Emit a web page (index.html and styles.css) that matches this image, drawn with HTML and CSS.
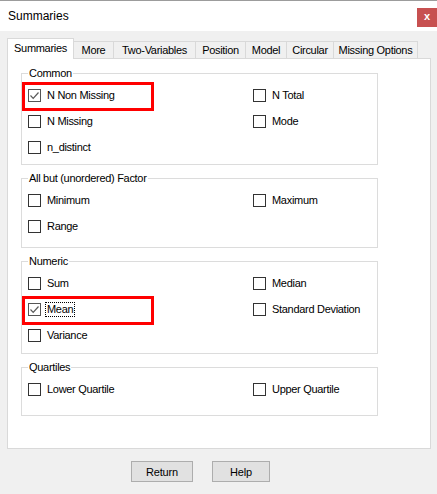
FILE: index.html
```html
<!DOCTYPE html>
<html>
<head>
<meta charset="utf-8">
<title>Summaries</title>
<link rel="stylesheet" href="styles.css">
</head>
<body>
<div class="window">
  <header class="titlebar">
    <span class="title">Summaries</span>
    <span class="close">x</span>
  </header>
  <div class="content">
    <div class="tabs">
      <div class="tab active w-summaries">Summaries</div>
      <div class="tab w-more">More</div>
      <div class="tab w-two">Two-Variables</div>
      <div class="tab w-position">Position</div>
      <div class="tab w-model">Model</div>
      <div class="tab w-circular">Circular</div>
      <div class="tab w-missing">Missing Options</div>
    </div>
    <div class="panel">
      <fieldset class="group pb-common">
        <legend>Common</legend>
        <div class="grid">
          <label class="item marked"><span class="box checked"><svg viewBox="0 0 11 11" width="11" height="11"><path d="M1.5 5.5 L4.2 8.3 L9.5 2.5" fill="none" stroke="#5a5a5a" stroke-width="1.2"/></svg></span><span class="txt">N Non Missing</span></label>
          <label class="item"><span class="box"></span><span class="txt">N Total</span></label>
          <label class="item"><span class="box"></span><span class="txt">N Missing</span></label>
          <label class="item"><span class="box"></span><span class="txt">Mode</span></label>
          <label class="item"><span class="box"></span><span class="txt">n_distinct</span></label>
        </div>
      </fieldset>
      <fieldset class="group pb-allbut">
        <legend>All but (unordered) Factor</legend>
        <div class="grid">
          <label class="item"><span class="box"></span><span class="txt">Minimum</span></label>
          <label class="item"><span class="box"></span><span class="txt">Maximum</span></label>
          <label class="item"><span class="box"></span><span class="txt">Range</span></label>
        </div>
      </fieldset>
      <fieldset class="group pb-numeric">
        <legend>Numeric</legend>
        <div class="grid">
          <label class="item"><span class="box"></span><span class="txt">Sum</span></label>
          <label class="item"><span class="box"></span><span class="txt">Median</span></label>
          <label class="item marked"><span class="box checked"><svg viewBox="0 0 11 11" width="11" height="11"><path d="M1.5 5.5 L4.2 8.3 L9.5 2.5" fill="none" stroke="#5a5a5a" stroke-width="1.2"/></svg></span><span class="txt focus">Mean</span></label>
          <label class="item"><span class="box"></span><span class="txt">Standard Deviation</span></label>
          <label class="item"><span class="box"></span><span class="txt">Variance</span></label>
        </div>
      </fieldset>
      <fieldset class="group pb-quart">
        <legend>Quartiles</legend>
        <div class="grid">
          <label class="item"><span class="box"></span><span class="txt">Lower Quartile</span></label>
          <label class="item"><span class="box"></span><span class="txt">Upper Quartile</span></label>
        </div>
      </fieldset>
    </div>
    <div class="buttons">
      <button class="btn w-return">Return</button>
      <button class="btn w-help">Help</button>
    </div>
  </div>
</div>
</body>
</html>
```

FILE: styles.css
```css
* { box-sizing: border-box; }
html, body { margin: 0; padding: 0; }
body {
  width: 437px;
  height: 494px;
  background: #f0f0f0;
  font-family: "Liberation Sans", Arial, sans-serif;
  font-size: 11px;
  color: #000;
  overflow: hidden;
}
.window { width: 437px; height: 494px; }

.titlebar {
  height: 31px;
  background: #fff;
  border-top: 1px solid #9c9c9c;
  display: flex;
  justify-content: space-between;
  align-items: flex-start;
}
.title {
  font-size: 12px;
  line-height: 16px;
  margin-top: 7px;
  margin-left: 8px;
}
.close {
  margin-top: 7px;
  width: 20px;
  height: 19px;
  background: #c75050;
  color: #fff;
  font-size: 11px;
  font-weight: bold;
  line-height: 17px;
  text-align: center;
}

.content { padding-top: 7px; }

.tabs {
  display: flex;
  align-items: flex-end;
  margin-left: 7px;
  height: 20px;
  position: relative;
  z-index: 1;
}
.tab {
  height: 17px;
  border: 1px solid #d9d9d9;
  border-bottom: none;
  background: #f0f0f0;
  text-align: center;
  line-height: 15px;
  padding-top: 1px;
  margin-left: -1px;
  letter-spacing: -0.3px;
  white-space: nowrap;
}
.tab.active {
  height: 21px;
  margin-bottom: -1px;
  margin-left: 0;
  background: #fff;
  line-height: 14px;
  padding-top: 2px;
}
.w-summaries { width: 67px; }
.w-more { width: 41px; }
.w-two { width: 83px; }
.w-position { width: 51px; }
.w-model { width: 42px; }
.w-circular { width: 48px; }
.w-missing { width: 85px; }

.panel {
  margin-left: 7px;
  width: 424px;
  height: 391px;
  background: #fff;
  border: 1px solid #d9d9d9;
  padding: 7px 0 0 13px;
  display: flex;
  flex-direction: column;
  gap: 6px;
}

.group {
  margin: 0;
  width: 357px;
  min-width: 0;
  border: 1px solid #dcdcdc;
  padding: 0 6px 4px 6px;
}
.group legend {
  padding: 0 1px;
  line-height: 14px;
  letter-spacing: -0.3px;
}
.pb-common { padding-bottom: 4px; }
.pb-allbut { padding-bottom: 8px; }
.pb-numeric { padding-bottom: 5px; }
.pb-quart { padding-bottom: 13px; }

.grid {
  display: grid;
  grid-template-columns: 225px 1fr;
  grid-auto-rows: 26px;
  padding-top: 2px;
}
.item {
  display: flex;
  align-items: center;
  gap: 6px;
  position: relative;
  letter-spacing: -0.3px;
  white-space: nowrap;
}
.box {
  width: 13px;
  height: 13px;
  border: 1px solid #333;
  background: #fff;
  flex: none;
  display: flex;
}
.box.checked { border-color: #555; }
.txt { line-height: 13px; }
.focus {
  outline: 1px dotted #000;
  padding: 0 1px;
  margin-left: -1px;
}
.marked::after {
  content: "";
  position: absolute;
  left: -6px;
  top: 0;
  width: 126px;
  height: 23px;
  border: 3px solid #f00;
}

.buttons {
  display: flex;
  gap: 19px;
  margin-top: 12px;
  margin-left: 131px;
}
.btn {
  height: 21px;
  background: #e1e1e1;
  border: 1px solid #adadad;
  font-family: "Liberation Sans", Arial, sans-serif;
  font-size: 11px;
  letter-spacing: -0.2px;
  color: #000;
  padding: 0;
}
.w-return { width: 62px; }
.w-help { width: 58px; }
```
